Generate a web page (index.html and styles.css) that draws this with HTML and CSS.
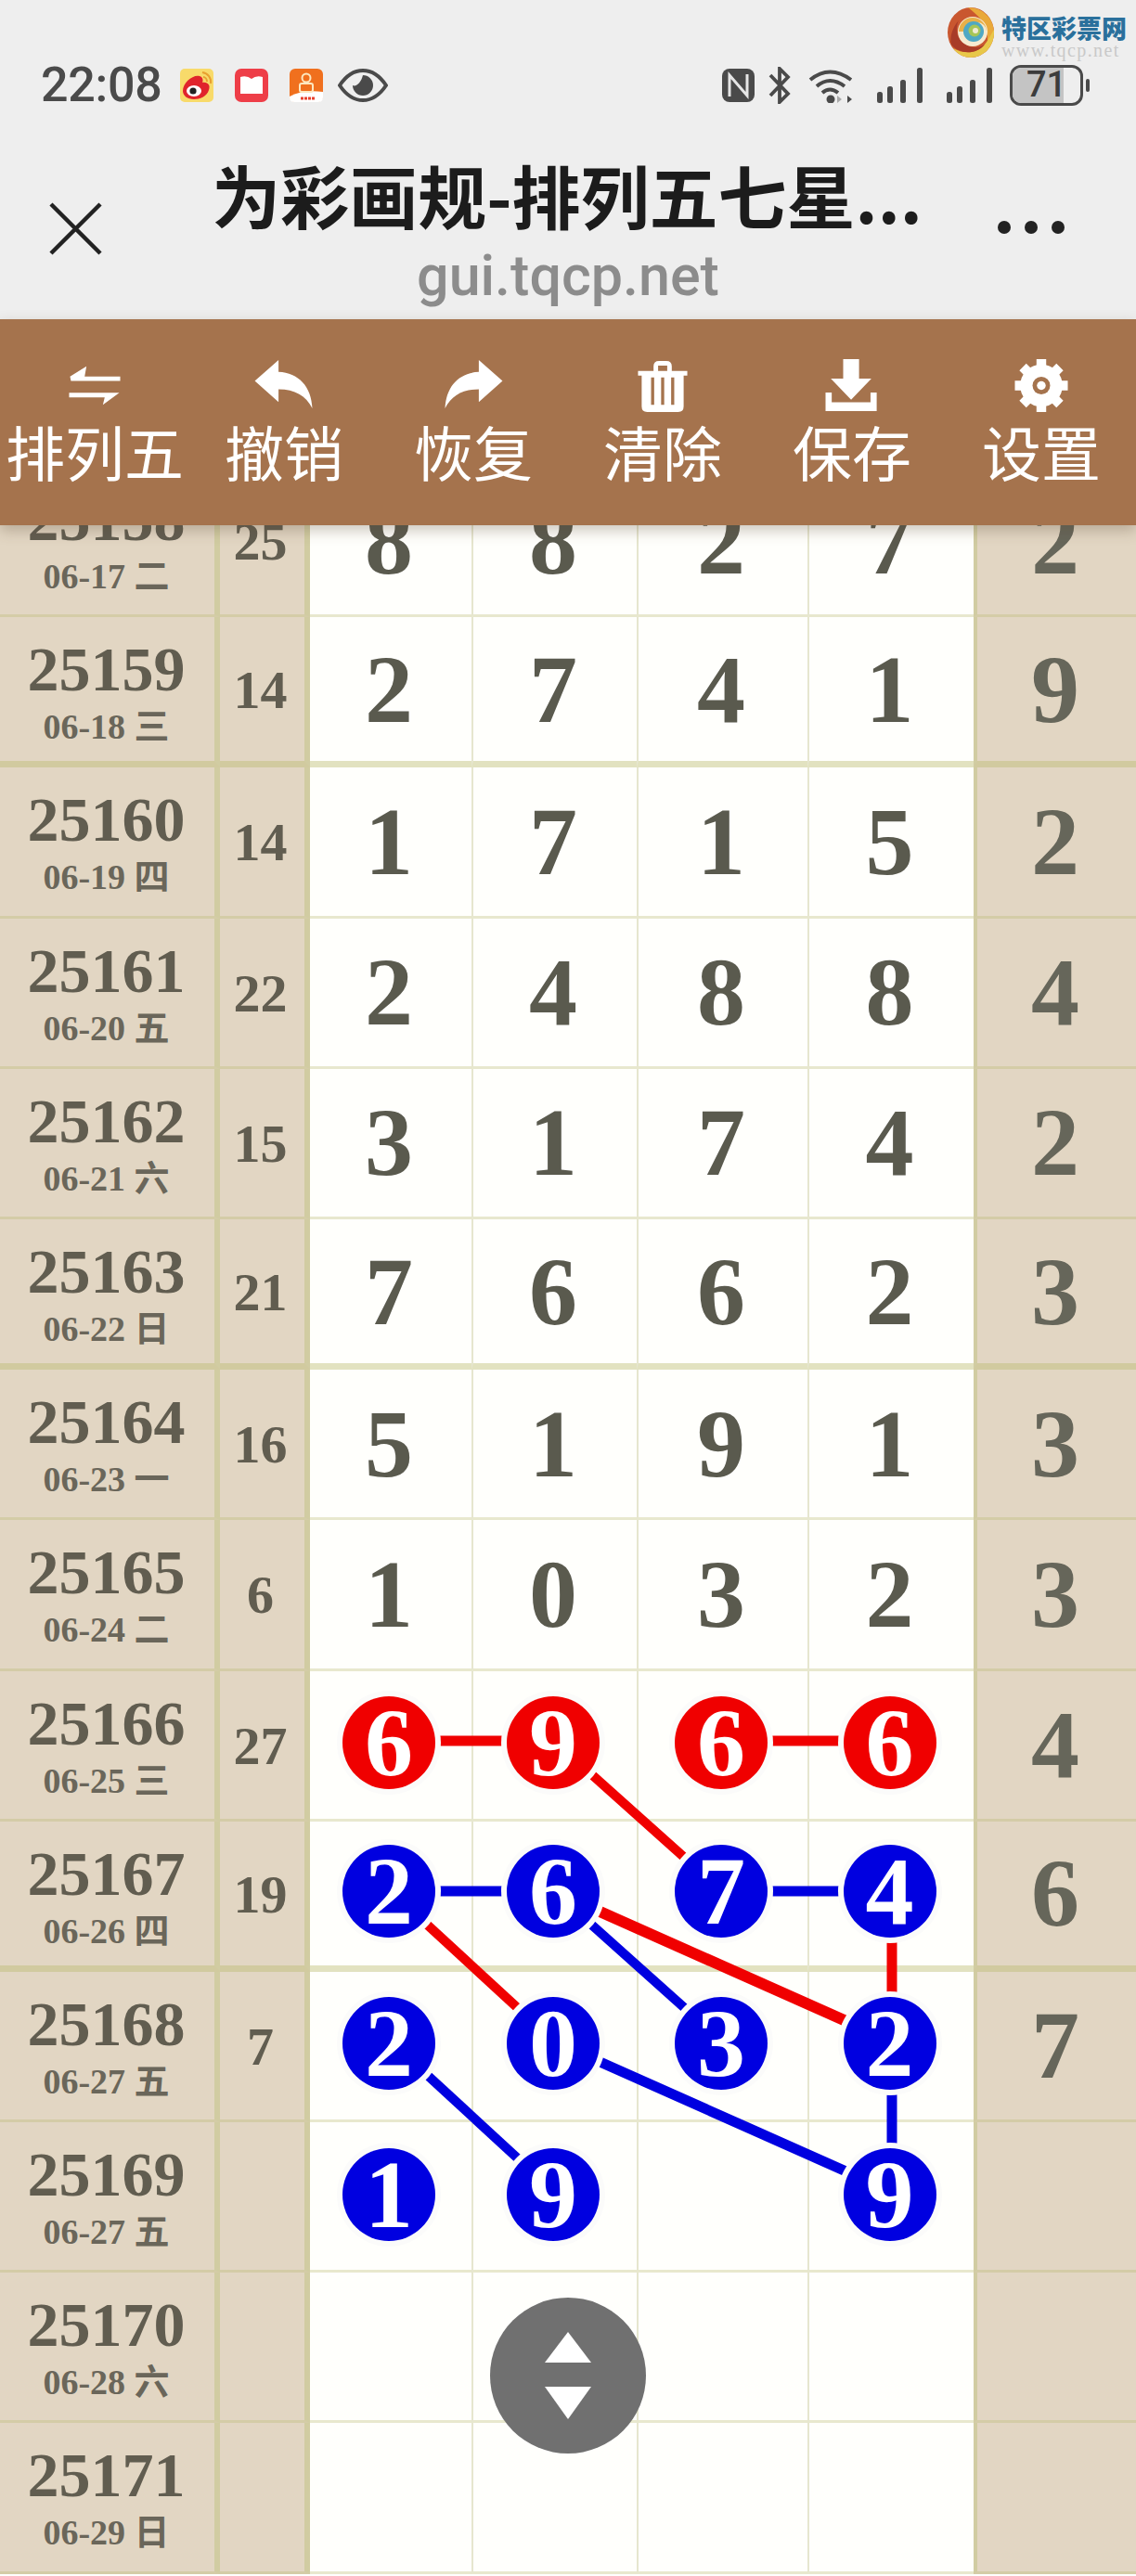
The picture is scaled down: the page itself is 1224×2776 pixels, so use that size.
FILE: index.html
```html
<!DOCTYPE html>
<html lang="zh-CN">
<head>
    <meta charset="UTF-8">
    <meta name="viewport" content="width=device-width, initial-scale=1.0">
    <title>为彩画规-排列五七星</title>
    <link rel="stylesheet" href="styles.css">
</head>
<body>
<div class="page">
    <header class="top">
        <div class="watermark">
            <svg class="wm-logo" viewBox="0 0 50 54">
                <ellipse cx="25" cy="27" rx="25" ry="27" fill="#c9572f"/>
                <path d="M22 0C38 0 50 12 50 27C50 36 46 44 40 49C45 38 44 22 36 13C32 8 27 4 22 0Z" fill="#e9a93a"/>
                <path d="M50 24C51 40 40 54 25 54C17 54 10 50 6 44C16 50 30 50 38 42C44 36 46 30 50 24Z" fill="#e8c84a"/>
                <path d="M4 40C12 50 30 52 40 40C32 45 20 44 13 34C9 28 9 20 12 14C5 22 2 32 4 40Z" fill="#a83c28"/>
                <circle cx="27" cy="26" r="16" fill="#f6ead0"/>
                <path d="M12 26A15 15 0 0 1 42 26A10 10 0 0 0 22 26Z" fill="#e8b04a"/>
                <circle cx="28" cy="26" r="11" fill="#4fa8c4"/>
                <circle cx="29" cy="25" r="6.5" fill="#a6c558"/>
                <circle cx="30" cy="25" r="3" fill="#f0ead4"/>
            </svg>
            <div class="wm-text">
                <div class="wm-name">特区彩票网</div>
                <div class="wm-url">www.tqcp.net</div>
            </div>
        </div>
        <div class="status">
            <div class="status-left">
                <span class="time">22:08</span>
                <svg class="ic-app" viewBox="0 0 36 36">
                    <rect width="36" height="36" rx="5" fill="#f8da6a"/>
                    <path d="M3 24C3 15 14 6 21 8C25 9 25 13 24 15C30 14 33 18 31 23C29 30 21 33 15 33C8 33 3 29 3 24Z" fill="#e0242c"/>
                    <ellipse cx="15" cy="24" rx="8" ry="6" fill="#fff"/>
                    <circle cx="14" cy="24" r="3.6" fill="#222"/>
                    <path d="M24 4C30 5 34 10 33 16M25 9C27 9 29 11 29 14" fill="none" stroke="#e8a030" stroke-width="2"/>
                </svg>
                <svg class="ic-app ic-book" viewBox="0 0 36 36">
                    <rect width="36" height="36" rx="7" fill="#ee3e48"/>
                    <path d="M6 9Q13 7 18 11Q23 7 30 9V27H6Z" fill="#fff"/>
                </svg>
                <svg class="ic-app ic-kuai" viewBox="0 0 36 36">
                    <rect width="36" height="36" rx="6" fill="#f0701e"/>
                    <path d="M0 30Q14 22 36 25V31Q36 36 31 36H5Q0 36 0 31Z" fill="#fff"/>
                    <circle cx="18" cy="10" r="4.5" fill="none" stroke="#fde8c0" stroke-width="2"/>
                    <rect x="11" y="16" width="14" height="9" rx="2" fill="none" stroke="#fde8c0" stroke-width="2"/>
                    <path d="M12 32H28" stroke="#e8402c" stroke-width="3" stroke-dasharray="3 1"/>
                </svg>
                <svg class="ic-eye" viewBox="0 0 54 36">
                    <path d="M2 18C10 6 18 2 27 2C36 2 44 6 52 18C44 30 36 34 27 34C18 34 10 30 2 18Z" fill="none" stroke="#4a4a4a" stroke-width="4"/>
                    <path d="M27 7A11 11 0 1 1 16 18C20 20 25 15 27 7Z" fill="#4a4a4a"/>
                </svg>
            </div>
            <div class="status-right">
                <svg class="ic-nfc" viewBox="0 0 37 38">
                    <rect x="1" y="1" width="35" height="36" rx="8" fill="#4a4a4a"/>
                    <path d="M9 31V8L28 30V7" fill="none" stroke="#e6e6e6" stroke-width="3"/>
                </svg>
                <svg class="ic-bt" viewBox="0 0 24 40">
                    <path d="M2 9L21 29L12 38V2L21 11L2 31" fill="none" stroke="#4a4a4a" stroke-width="3.8"/>
                </svg>
                <svg class="ic-wifi" viewBox="0 0 52 38">
                    <path d="M3 13Q24 -4 47 13M10 20Q24 8 40 20M16 27Q24 20 33 27" fill="none" stroke="#4a4a4a" stroke-width="4"/>
                    <circle cx="25" cy="34" r="4.5" fill="#4a4a4a"/>
                    <path d="M37 34L32 30V38Z" fill="#aaa"/>
                    <path d="M44 34L49 30 V38Z" fill="#4a4a4a" transform="rotate(180 46 34)"/>
                </svg>
                <svg class="ic-signal" viewBox="0 0 52 40">
                    <g fill="#4a4a4a"><rect x="0" y="27" width="6" height="12" rx="2.5"/><rect x="11" y="21" width="6" height="18" rx="2.5"/><rect x="25" y="14" width="6" height="25" rx="2.5"/><rect x="43" y="1" width="6" height="38" rx="2.5"/></g>
                </svg>
                <svg class="ic-signal" viewBox="0 0 52 40">
                    <g fill="#4a4a4a"><rect x="0" y="27" width="6" height="12" rx="2.5"/><rect x="11" y="21" width="6" height="18" rx="2.5"/><rect x="25" y="14" width="6" height="25" rx="2.5"/><rect x="43" y="1" width="6" height="38" rx="2.5"/></g>
                </svg>
                <div class="battery"><span class="battery-fill"></span><span class="battery-num">71</span></div>
                <span class="battery-tip"></span>
            </div>
        </div>
        <div class="titlebar">
            <svg class="ic-close" viewBox="0 0 58 58">
                <path d="M2 2L56 56M56 2L2 56" stroke="#222" stroke-width="4.5" fill="none"/>
            </svg>
            <div class="title-wrap">
                <div class="title">为彩画规-排列五七星...</div>
                <div class="domain">gui.tqcp.net</div>
            </div>
            <div class="more"><span></span><span></span><span></span></div>
        </div>
    </header>

    <nav class="toolbar">
        <div class="tool">
            <svg class="tool-ic" viewBox="0 0 60 58">
                <path d="M3 19H58V24H4ZM3 19L21 8L19 19ZM2 37H57L39 50L41 42H2Z" fill="#fff"/>
            </svg>
            <span>排列五</span>
        </div>
        <div class="tool">
            <svg class="tool-ic" viewBox="0 0 64 58">
                <path d="M0 24L26 1V14C48 15 62 30 63 54C56 40 44 33 26 33V47Z" fill="#fff"/>
            </svg>
            <span>撤销</span>
        </div>
        <div class="tool">
            <svg class="tool-ic" viewBox="0 0 64 58">
                <path d="M64 24L38 1V14C16 15 2 30 1 54C8 40 20 33 38 33V47Z" fill="#fff"/>
            </svg>
            <span>恢复</span>
        </div>
        <div class="tool">
            <svg class="tool-ic" viewBox="0 0 60 58">
                <path d="M3 13H57V18H53V52Q53 58 47 58H13Q7 58 7 52V18H3ZM20 8Q20 2 26 2H34Q40 2 40 8V13H35V7H25V13H20Z" fill="#fff"/>
                <path d="M19 20V50M30 20V50M41 20V50" stroke="#a5734d" stroke-width="3.4"/>
            </svg>
            <span>清除</span>
        </div>
        <div class="tool">
            <svg class="tool-ic" viewBox="0 0 60 60">
                <path d="M20 0H38V22H52L29 46L6 22H20ZM0 38H7V49H51V38H58V59H0Z" fill="#fff"/>
            </svg>
            <span>保存</span>
        </div>
        <div class="tool">
            <svg class="tool-ic" viewBox="0 0 60 60">
                <circle cx="30" cy="30" r="17" fill="none" stroke="#fff" stroke-width="14"/>
                <path d="M30 0V60M0 30H60M9 9L51 51M51 9L9 51" stroke="#fff" stroke-width="11"/>
                <circle cx="30" cy="30" r="10" fill="#a5734d"/>
                <circle cx="30" cy="30" r="5" fill="#fff"/>
            </svg>
            <span>设置</span>
        </div>
    </nav>

    <main class="board">
        <div class="row"><div class="c-issue"><b>25158</b><small>06-17 二</small></div><div class="c-sum">25</div><div class="c-n">8</div><div class="c-n">8</div><div class="c-n">2</div><div class="c-n">7</div><div class="c-last">2</div></div>
        <div class="row row-end"><div class="c-issue"><b>25159</b><small>06-18 三</small></div><div class="c-sum">14</div><div class="c-n">2</div><div class="c-n">7</div><div class="c-n">4</div><div class="c-n">1</div><div class="c-last">9</div></div>
        <div class="row"><div class="c-issue"><b>25160</b><small>06-19 四</small></div><div class="c-sum">14</div><div class="c-n">1</div><div class="c-n">7</div><div class="c-n">1</div><div class="c-n">5</div><div class="c-last">2</div></div>
        <div class="row"><div class="c-issue"><b>25161</b><small>06-20 五</small></div><div class="c-sum">22</div><div class="c-n">2</div><div class="c-n">4</div><div class="c-n">8</div><div class="c-n">8</div><div class="c-last">4</div></div>
        <div class="row"><div class="c-issue"><b>25162</b><small>06-21 六</small></div><div class="c-sum">15</div><div class="c-n">3</div><div class="c-n">1</div><div class="c-n">7</div><div class="c-n">4</div><div class="c-last">2</div></div>
        <div class="row row-end"><div class="c-issue"><b>25163</b><small>06-22 日</small></div><div class="c-sum">21</div><div class="c-n">7</div><div class="c-n">6</div><div class="c-n">6</div><div class="c-n">2</div><div class="c-last">3</div></div>
        <div class="row"><div class="c-issue"><b>25164</b><small>06-23 一</small></div><div class="c-sum">16</div><div class="c-n">5</div><div class="c-n">1</div><div class="c-n">9</div><div class="c-n">1</div><div class="c-last">3</div></div>
        <div class="row"><div class="c-issue"><b>25165</b><small>06-24 二</small></div><div class="c-sum">6</div><div class="c-n">1</div><div class="c-n">0</div><div class="c-n">3</div><div class="c-n">2</div><div class="c-last">3</div></div>
        <div class="row"><div class="c-issue"><b>25166</b><small>06-25 三</small></div><div class="c-sum">27</div><div class="c-n"><i class="ball red">6</i></div><div class="c-n"><i class="ball red">9</i></div><div class="c-n"><i class="ball red">6</i></div><div class="c-n"><i class="ball red">6</i></div><div class="c-last">4</div></div>
        <div class="row row-end"><div class="c-issue"><b>25167</b><small>06-26 四</small></div><div class="c-sum">19</div><div class="c-n"><i class="ball">2</i></div><div class="c-n"><i class="ball">6</i></div><div class="c-n"><i class="ball">7</i></div><div class="c-n"><i class="ball">4</i></div><div class="c-last">6</div></div>
        <div class="row"><div class="c-issue"><b>25168</b><small>06-27 五</small></div><div class="c-sum">7</div><div class="c-n"><i class="ball">2</i></div><div class="c-n"><i class="ball">0</i></div><div class="c-n"><i class="ball">3</i></div><div class="c-n"><i class="ball">2</i></div><div class="c-last">7</div></div>
        <div class="row"><div class="c-issue"><b>25169</b><small>06-27 五</small></div><div class="c-sum"></div><div class="c-n"><i class="ball">1</i></div><div class="c-n"><i class="ball">9</i></div><div class="c-n"></div><div class="c-n"><i class="ball">9</i></div><div class="c-last"></div></div>
        <div class="row"><div class="c-issue"><b>25170</b><small>06-28 六</small></div><div class="c-sum"></div><div class="c-n"></div><div class="c-n"></div><div class="c-n"></div><div class="c-n"></div><div class="c-last"></div></div>
        <div class="row"><div class="c-issue"><b>25171</b><small>06-29 日</small></div><div class="c-sum"></div><div class="c-n"></div><div class="c-n"></div><div class="c-n"></div><div class="c-n"></div><div class="c-last"></div></div>

        <!-- lines between the balls, coordinates are board px -->
        <svg class="links" viewBox="0 0 1224 2276">
            <g stroke="#f00000" stroke-width="11">
                <path d="M421 1375H597"/>
                <path d="M778 1375H961"/>
                <path d="M597 1375L778 1537" stroke-width="10"/>
                <path d="M421 1537L597 1699" stroke-width="10"/>
                <path d="M597 1537L961 1699" stroke-width="12"/>
                <path d="M961 1537V1699"/>
            </g>
            <g stroke="#0000e0" stroke-width="11">
                <path d="M421 1537H597"/>
                <path d="M778 1537H961"/>
                <path d="M597 1537L778 1699" stroke-width="10"/>
                <path d="M421 1699L597 1861" stroke-width="10"/>
                <path d="M597 1699L961 1861"/>
                <path d="M961 1699V1861"/>
            </g>
        </svg>
    </main>

    <div class="float-btn">
        <svg viewBox="0 0 50 94">
            <path d="M25 0L50 33H0Z" fill="#fff"/>
            <path d="M0 59H50L25 94Z" fill="#fff"/>
        </svg>
    </div>
</div>
</body>
</html>
```

FILE: styles.css
```css
* {
    box-sizing: border-box;
}
body {
    margin: 0;
    font-family: "Liberation Serif", "Noto Sans CJK SC", serif;
    background: #fff;
}
.page {
    position: relative;
    width: 1224px;
    height: 2776px;
    overflow: hidden;
}

/* top of the phone */
.top {
    position: relative;
    height: 344px;
    background: #eeeeee;
    font-family: Roboto, "Noto Sans CJK SC", sans-serif;
}
.watermark {
    position: absolute;
    top: 8px;
    right: 10px;
    display: flex;
    gap: 8px;
}
.wm-logo {
    width: 50px;
    height: 54px;
}
.wm-text {
    padding-top: 6px;
}
.wm-name {
    font: 900 27px/31px "Noto Sans CJK SC", sans-serif;
    color: #2a709c;
}
.wm-url {
    font: 20px/19px "Liberation Serif", serif;
    letter-spacing: 1.4px;
    color: #c9c9c9;
}
.status {
    display: flex;
    justify-content: space-between;
    align-items: center;
    height: 44px;
    margin-top: 0;
    padding: 0 50px 0 44px;
    position: relative;
    top: 70px;
}
.status-left, .status-right {
    display: flex;
    align-items: center;
}
.time {
    font-size: 52px;
    font-weight: 500;
    line-height: 44px;
    letter-spacing: -0.3px;
    color: #4a4a4a;
    margin-right: 20px;
}
.ic-app {
    width: 36px;
    height: 36px;
    margin-right: 23px;
}
.ic-kuai {
    margin-right: 16px;
}
.ic-eye {
    width: 54px;
    height: 36px;
}
.ic-nfc {
    width: 37px;
    height: 38px;
    margin-right: 14px;
}
.ic-bt {
    width: 24px;
    height: 40px;
    margin-right: 18px;
}
.ic-wifi {
    width: 52px;
    height: 38px;
    margin-right: 23px;
}
.ic-signal {
    width: 52px;
    height: 40px;
    margin-right: 23px;
}
.ic-signal + .ic-signal {
    margin-right: 16px;
}
.battery {
    position: relative;
    width: 79px;
    height: 44px;
    border: 3.5px solid #4a4a4a;
    border-radius: 12px;
    overflow: hidden;
    text-align: center;
}
.battery-fill {
    position: absolute;
    left: 0;
    top: 0;
    bottom: 0;
    width: 76%;
    background: #c4c4c4;
}
.battery-num {
    position: relative;
    font-size: 38px;
    font-weight: 500;
    line-height: 37px;
    color: #3c3c3c;
}
.battery-tip {
    width: 4px;
    height: 14px;
    margin-left: 3px;
    background: #4a4a4a;
    border-radius: 2px;
}
.titlebar {
    position: absolute;
    left: 0;
    right: 0;
    top: 162px;
    height: 170px;
}
.ic-close {
    position: absolute;
    left: 53px;
    top: 56px;
    width: 57px;
    height: 57px;
}
.title-wrap {
    text-align: center;
}
.title {
    font: 700 74px/94px "Noto Sans CJK SC", sans-serif;
    color: #1c1c1c;
    margin-left: -2px;
}
.domain {
    font-size: 61px;
    font-weight: 500;
    line-height: 66px;
    margin-top: 8px;
    color: #8c8c8c;
}
.more {
    position: absolute;
    left: 1075px;
    top: 76px;
    display: flex;
    gap: 15px;
}
.more span {
    width: 14px;
    height: 14px;
    border-radius: 50%;
    background: #222;
}

/* brown action bar */
.toolbar {
    position: relative;
    z-index: 3;
    display: grid;
    grid-template-columns: repeat(6, 204px);
    height: 222px;
    padding-top: 43px;
    background: #a5734d;
    box-shadow: 0 6px 14px rgba(90, 70, 50, 0.3);
}
.tool {
    display: flex;
    flex-direction: column;
    align-items: center;
    color: #fff;
    font: 64px/76px "Noto Sans CJK SC", sans-serif;
}
.tool-ic {
    height: 57px;
    width: 66px;
    margin-bottom: 3px;
    flex: none;
}

/* the lottery table */
.board {
    position: relative;
    margin-top: -63px;
}
.row {
    display: grid;
    grid-template-columns: 237px 97px 174px 178px 184px 179px 175px;
    height: 162.2px;
    color: #5a5a4e;
    font-weight: 700;
}
.row > div {
    border-bottom: 3px solid rgba(185, 185, 110, 0.32);
    display: flex;
    align-items: center;
    justify-content: center;
}
.row-end > div {
    border-bottom-width: 7px;
    border-bottom-color: rgba(185, 185, 110, 0.42);
}
.c-issue, .c-sum, .c-last {
    background: #e2d6c3;
}
.row > .c-issue {
    flex-direction: column;
    justify-content: flex-start;
    padding: 26px 2px 0 0;
    border-right: 6px solid #d1cca2;
}
.c-issue b {
    font-size: 68px;
    line-height: 61px;
    color: #615d50;
}
.c-issue small {
    font-size: 38px;
    line-height: 44px;
    margin-top: 9px;
    color: #6a665a;
}
.row > .c-sum {
    font-size: 58px;
    padding: 2px 4px 0 0;
    border-right: 6px solid #d1cca2;
    color: #615d50;
}
.c-n, .c-last {
    font-size: 104px;
    line-height: 1;
}
.row > .c-n {
    background: #fffffc;
    border-left: 2px solid #e6e6cf;
    padding-right: 4px;
}
.row > .c-n:nth-child(3) {
    border-left: 0;
}
.row > .c-last {
    border-left: 4px solid #d1cca2;
    padding-right: 3px;
    color: #66665a;
}
.ball {
    position: relative;
    z-index: 2;
    display: flex;
    align-items: center;
    justify-content: center;
    width: 100px;
    height: 100px;
    margin-bottom: 4px;
    border-radius: 50%;
    background: #0000e0;
    box-shadow: 0 0 0 6px #fbfbfa;
    color: #fff;
    font-style: normal;
    font-size: 104px;
    line-height: 1;
}
.ball.red {
    background: #f00000;
}
.links {
    position: absolute;
    left: 0;
    top: -2px;
    width: 1224px;
    height: 2276px;
    z-index: 1;
    pointer-events: none;
}

/* scroll button */
.float-btn {
    position: absolute;
    z-index: 4;
    left: 528px;
    top: 2476px;
    width: 168px;
    height: 168px;
    border-radius: 50%;
    background: #707070;
    display: flex;
    align-items: center;
    justify-content: center;
}
.float-btn svg {
    width: 50px;
    height: 94px;
}
```
